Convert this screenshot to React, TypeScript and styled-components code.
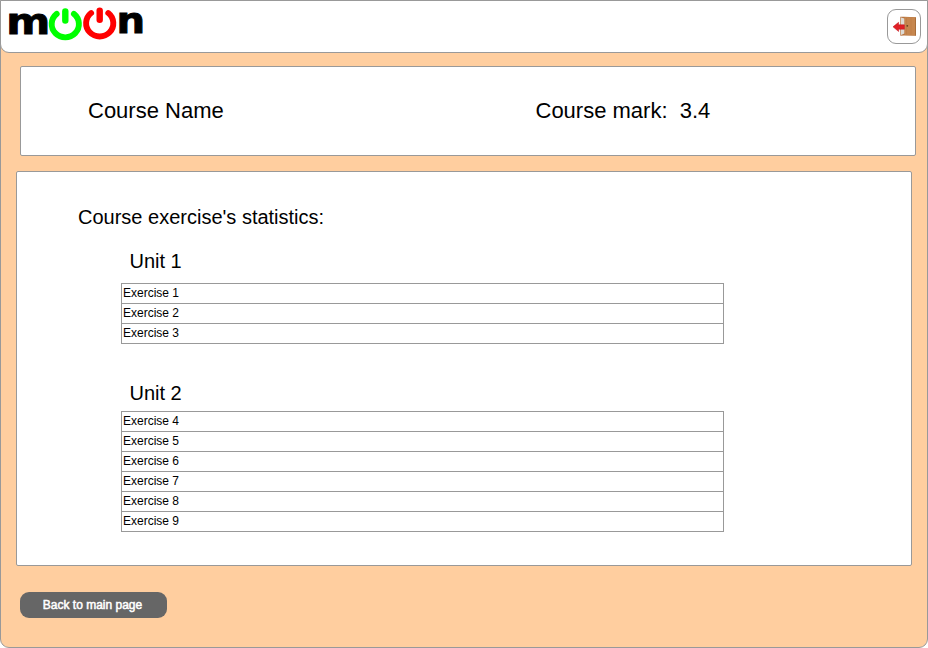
import React from "react";
import styled, { createGlobalStyle } from "styled-components";

const GlobalStyle = createGlobalStyle`
  * { box-sizing: border-box; }
  body { margin: 0; background: #fff; color: #000; font-family: "Liberation Sans", Arial, sans-serif; }
`;

const Page = styled.div`
  width: 928px;
  height: 648px;
  display: flex;
  flex-direction: column;
  background: #ffce9f;
  border: 1px solid #999;
  border-radius: 0 0 9px 9px;
`;

const Header = styled.header`
  flex: none;
  height: 53px;
  margin: -1px -1px 0;
  display: flex;
  justify-content: space-between;
  align-items: flex-start;
  padding: 8px 6px 0 7px;
  background: #fff;
  border: 1px solid #999;
  border-radius: 0 0 9px 9px;
`;

const Logo = styled.svg`
  display: block;
  width: 140px;
  height: 46px;
  margin-top: -9px;
  overflow: visible;
`;

const LogoLetter = styled.text`
  font-family: "DejaVu Sans", sans-serif;
  font-weight: bold;
  font-size: 36px;
  stroke: #000;
  stroke-width: 0.9px;
`;

const ExitButton = styled.button`
  width: 34px;
  height: 35px;
  padding: 0;
  display: flex;
  align-items: center;
  justify-content: center;
  background: #fff;
  border: 1px solid #999;
  border-radius: 9px;
`;

const Panel = styled.section`
  flex: none;
  width: 896px;
  background: #fff;
  border: 1px solid #999;
  border-radius: 2px;
`;

const Summary = styled(Panel)`
  height: 90px;
  margin: 13px 0 0 19px;
  padding: 0 67px;
  display: grid;
  grid-template-columns: 447.5px 1fr;
  align-items: center;
  font-size: 22px;
  white-space: pre;
`;

const Statistics = styled(Panel)`
  height: 395px;
  margin: 15px 0 0 15px;
  padding: 33px 61px 0;
`;

const Heading = styled.h1`
  margin: 0;
  font-size: 20px;
  font-weight: normal;
  line-height: 24px;
`;

const Unit = styled.section<{ $top: number; $gap: number }>`
  width: 603px;
  margin: ${(p) => p.$top}px 0 0 43px;
  display: grid;
  gap: ${(p) => p.$gap}px;
`;

const UnitName = styled.h2`
  margin: 0;
  padding-left: 8.5px;
  font-size: 20px;
  font-weight: normal;
  line-height: 24px;
`;

const Exercises = styled.ul`
  margin: 0;
  padding: 0;
  list-style: none;
  border: 1px solid #999;
  border-top: 0;
`;

const Exercise = styled.li`
  height: 20px;
  padding-left: 1px;
  border-top: 1px solid #999;
  font-size: 12px;
  line-height: 18px;
`;

const BackButton = styled.button`
  flex: none;
  width: 147px;
  height: 26px;
  margin: 26px 0 0 19px;
  padding: 0 2px 0 0;
  border: 0;
  border-radius: 9px;
  background: #666;
  color: #fff;
  font: 12px/26px "Liberation Sans", Arial, sans-serif;
  -webkit-text-stroke: 0.5px #fff;
`;

const units = [
  { name: "Unit 1", top: 20, gap: 10, exercises: [1, 2, 3] },
  { name: "Unit 2", top: 37, gap: 6, exercises: [4, 5, 6, 7, 8, 9] },
];

function PowerSymbol({ x, y, color }: { x: number; y: number; color: string }) {
  return (
    <g transform={`translate(${x} ${y})`} fill="none" stroke={color} strokeLinecap="round">
      <path d="M-8.6 -10.1A13.6 13.2 0 1 0 8.6 -10.1" strokeWidth="5.9" />
      <path d="M0 -12.5V-3.4" strokeWidth="6.4" />
    </g>
  );
}

function MoonLogo() {
  return (
    <Logo viewBox="0 -6 140 46" role="img" aria-label="moon">
      <LogoLetter x="-1.7" y="28.1" textLength="44" lengthAdjust="spacingAndGlyphs">m</LogoLetter>
      <PowerSymbol x={57.3} y={18} color="#00ff00" />
      <PowerSymbol x={91.7} y={17.1} color="#ff0000" />
      <LogoLetter x="108.4" y="27.2" textLength="28.6" lengthAdjust="spacingAndGlyphs">n</LogoLetter>
    </Logo>
  );
}

function ExitIcon() {
  return (
    <svg width="24" height="22" viewBox="0 0 24 22" aria-hidden="true">
      <path d="M8.3 .8H12L24 1.2V19.8L12 19.5L8.3 19.8Z" fill="#b87540" />
      <path d="M9 1.6L12.5 2.6V17.6L9 19Z" fill="#dedbd5" />
      <path d="M12.6 1.2L23.3 1.6V19.3L12.6 18.9Z" fill="#c6864e" />
      <path d="M14.5 2V18.5M19 2V18.8" stroke="#bd7c46" strokeWidth=".7" />
      <path d="M23.7 1.5V19.6" stroke="#94602f" strokeWidth=".6" />
      <circle cx="15.3" cy="9.8" r=".9" fill="#63401f" />
      <path d="M1 10.8L6.6 6.3V8.8H12.4V13.2H6.6V15.5Z" fill="#e02026" stroke="#c01018" strokeWidth=".5" />
    </svg>
  );
}

export default function App() {
  return (
    <>
      <GlobalStyle />
      <Page>
        <Header>
          <MoonLogo />
          <ExitButton aria-label="Exit"><ExitIcon /></ExitButton>
        </Header>
        <Summary>
          <span>Course Name</span>
          <span>{"Course mark:  3.4"}</span>
        </Summary>
        <Statistics>
          <Heading>Course exercise's statistics:</Heading>
          {units.map((unit) => (
            <Unit key={unit.name} $top={unit.top} $gap={unit.gap}>
              <UnitName>{unit.name}</UnitName>
              <Exercises>
                {unit.exercises.map((n) => <Exercise key={n}>Exercise {n}</Exercise>)}
              </Exercises>
            </Unit>
          ))}
        </Statistics>
        <BackButton>Back to main page</BackButton>
      </Page>
    </>
  );
}
